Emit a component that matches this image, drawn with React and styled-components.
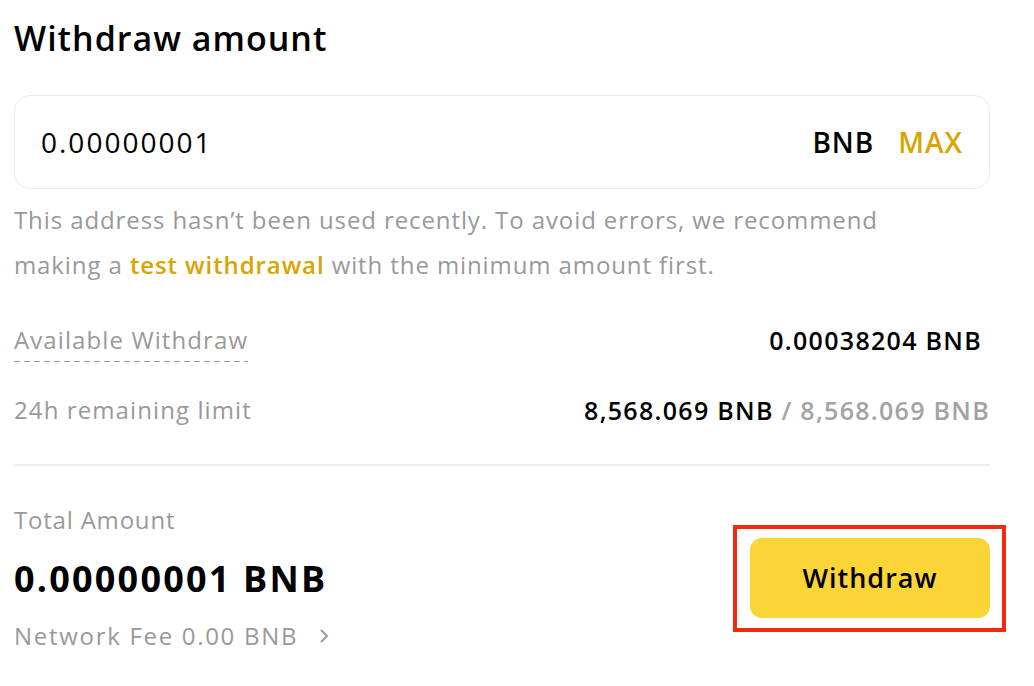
import styled, { createGlobalStyle } from "styled-components";

const Global = createGlobalStyle`
  body{margin:0;background:#fff;font-family:"Open Sans",Lato,sans-serif;color:#000;}
`;

const Page = styled.div`
  width:976px;padding:12px 0 0 14px;
`;
const Title = styled.h2`
  margin:0;font-size:34px;font-weight:600;line-height:52px;letter-spacing:1px;
`;
const InputBox = styled.div`
  margin-top:31px;height:92px;border:1px solid #ebebeb;border-radius:16px;
  display:flex;align-items:center;padding:0 26px;gap:24px;
`;
const AmountInput = styled.input`
  flex:1;border:none;outline:none;font:inherit;font-size:28px;font-weight:500;color:#000;
  background:transparent;padding:0;letter-spacing:2px;
`;
const Unit = styled.span`
  font-size:28px;font-weight:600;letter-spacing:1px;color:${p => p.$gold ? "#dba300" : "#000"};
`;
const Hint = styled.p`
  margin:8px 0 0;font-size:24px;line-height:45px;color:#999;letter-spacing:.9px;
  a{color:#dba300;font-weight:600;text-decoration:none;}
`;
const Rows = styled.div`
  margin-top:38px;display:flex;flex-direction:column;gap:33px;
`;
const Row = styled.div`
  display:flex;justify-content:space-between;align-items:flex-start;line-height:30px;
`;
const Label = styled.span`
  font-size:24px;color:#999;letter-spacing:1.1px;
  ${p => p.$dashed && `
    padding-bottom:7px;
    background:repeating-linear-gradient(to right,#999 0 6px,transparent 6px 10px) left bottom / 100% 1.5px no-repeat;
  `}
`;
const Value = styled.span`
  font-size:25px;font-weight:600;letter-spacing:1.3px;color:#000;margin-right:${p => p.$inset || 0}px;
  .muted{color:#a3a3a3;}
`;
const Divider = styled.hr`
  margin:39px 0 0;border:none;border-top:2px solid #eeeeee;
`;
const Footer = styled.div`
  margin-top:39px;display:flex;justify-content:space-between;align-items:center;
`;
const Summary = styled.div`
  display:flex;flex-direction:column;
`;
const SmallGrey = styled.div`
  font-size:24px;line-height:30px;color:#999;letter-spacing:${p => p.$ls || 0.8}px;
  display:flex;align-items:center;gap:20px;
`;
const Total = styled.div`
  font-size:36px;font-weight:700;line-height:40px;margin:24px 0 22px;letter-spacing:2.2px;
`;
const Highlight = styled.div`
  border:4px solid #f22a10;padding:9px 12px 10px 13px;margin-right:-16px;
`;
const WithdrawBtn = styled.button`
  width:240px;height:80px;border:none;border-radius:12px;background:#fbd535;
  font:inherit;font-size:27px;font-weight:600;letter-spacing:1px;color:#000;cursor:pointer;
`;

export default function App() {
  return (
    <Page>
      <Global />
      <Title>Withdraw amount</Title>
      <InputBox>
        <AmountInput defaultValue="0.00000001" />
        <Unit>BNB</Unit>
        <Unit $gold>MAX</Unit>
      </InputBox>
      <Hint>
        This address hasn’t been used recently. To avoid errors, we recommend<br />
        making a <a href="#">test withdrawal</a> with the minimum amount first.
      </Hint>
      <Rows>
        <Row>
          <Label $dashed>Available Withdraw</Label>
          <Value $inset={8}>0.00038204 BNB</Value>
        </Row>
        <Row>
          <Label>24h remaining limit</Label>
          <Value>8,568.069 BNB <span className="muted">/ 8,568.069 BNB</span></Value>
        </Row>
      </Rows>
      <Divider />
      <Footer>
        <Summary>
          <SmallGrey>Total Amount</SmallGrey>
          <Total>0.00000001 BNB</Total>
          <SmallGrey $ls={1.7}>
            Network Fee 0.00 BNB
            <svg width="12" height="18" viewBox="0 0 12 18" fill="none">
              <polyline points="3,3 9,9 3,15" stroke="#999" strokeWidth="2" />
            </svg>
          </SmallGrey>
        </Summary>
        <Highlight>
          <WithdrawBtn>Withdraw</WithdrawBtn>
        </Highlight>
      </Footer>
    </Page>
  );
}
